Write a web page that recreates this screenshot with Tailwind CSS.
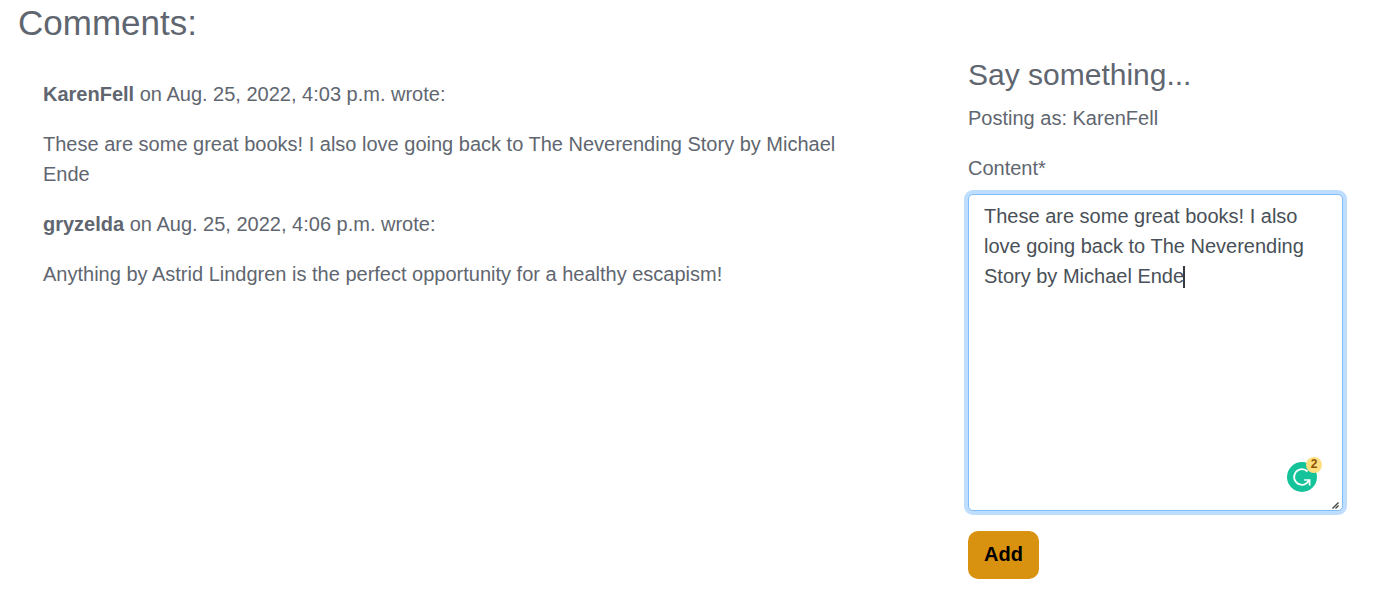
<!DOCTYPE html>
<html lang="en">
<head>
<meta charset="utf-8">
<title>Comments</title>
<script src="https://cdn.jsdelivr.net/npm/@tailwindcss/browser@4"></script>
</head>
<body class="bg-white font-['Liberation_Sans',Arial,sans-serif] text-[20px] leading-[30px] text-[#5f6670]">
<main class="px-[18px] pt-[2px]">
  <h1 class="text-[35px] leading-[42px]">Comments:</h1>
  <div class="flex items-start">
    <section class="flex-1 pl-[25px] pr-[110px] pt-[35px] flex flex-col gap-5">
      <p><strong>KarenFell</strong> on Aug. 25, 2022, 4:03 p.m. wrote:</p>
      <p>These are some great books! I also love going back to The Neverending Story by Michael Ende</p>
      <p><strong>gryzelda</strong> on Aug. 25, 2022, 4:06 p.m. wrote:</p>
      <p>Anything by Astrid Lindgren is the perfect opportunity for a healthy escapism!</p>
    </section>
    <form class="w-[399px] pr-6 pt-[13px]">
      <h2 class="text-[30px] leading-[36px] mb-[10px]">Say something...</h2>
      <p class="mb-5">Posting as: KarenFell</p>
      <label for="content" class="block mb-[11px]">Content*</label>
      <div class="relative mb-5">
        <textarea id="content" name="content" required class="block w-full h-[317px] px-[15px] py-[6px] border border-[#80bdff] rounded-[5px] bg-white text-[#495057] ring-4 ring-[#bfdeff] outline-none resize-none overflow-auto">These are some great books! I also love going back to The Neverending Story by Michael Ende</textarea>
        <span class="absolute left-[215px] top-[72px] w-[2px] h-[22px] bg-[#343a40]"></span>
        <svg class="absolute right-[26px] bottom-[19px] w-[30px] h-[30px]" viewBox="0 0 30 30" aria-hidden="true">
          <circle cx="15" cy="15" r="15" fill="#15c39a"/>
          <path d="M20.5 9.5A7.8 7.8 0 1 0 15 22.8Q19 22.8 22 18.4" fill="none" stroke="#fff" stroke-width="1.8"/>
          <path d="M17.2 18H22.6V23.4" fill="none" stroke="#fff" stroke-width="1.7"/>
        </svg>
        <span class="absolute right-[21px] bottom-[38px] w-4 h-4 rounded-full bg-[#ffde80] text-[#8a5300] text-[12px] leading-[15px] font-bold text-center">2</span>
        <svg class="absolute right-[4px] bottom-[2px] w-[7px] h-[7px]" viewBox="0 0 7 7" aria-hidden="true">
          <path d="M0.5 6.5L6.5 0.5M3.5 6.5L6.5 3.5" fill="none" stroke="#444" stroke-width="1.4"/>
        </svg>
      </div>
      <button type="submit" class="h-12 px-4 pb-[2px] rounded-[10px] bg-[#d9920f] text-black font-bold">Add</button>
    </form>
  </div>
</main>
</body>
</html>
